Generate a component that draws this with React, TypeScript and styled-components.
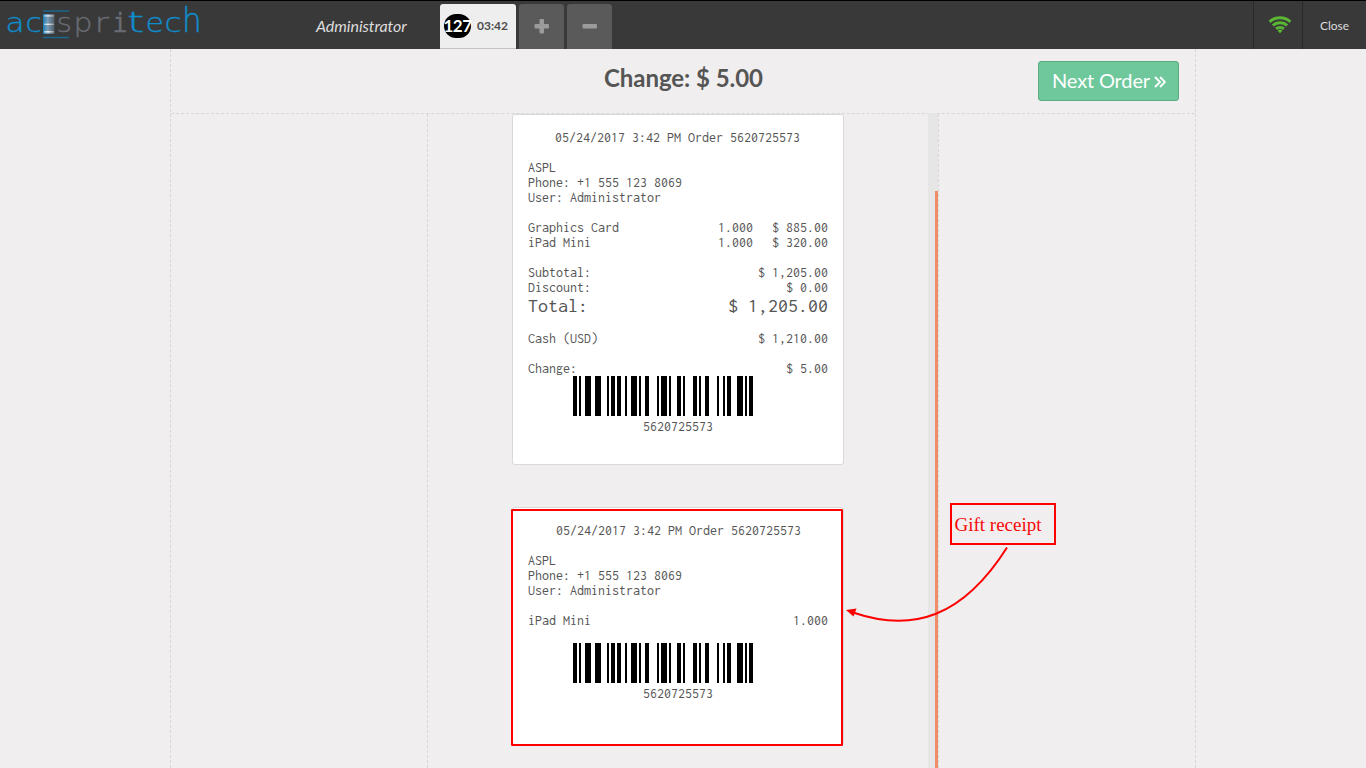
import React from "react";
import styled, { createGlobalStyle } from "styled-components";

const GlobalStyle = createGlobalStyle`
  * { box-sizing: border-box; }
  body { margin: 0; background: #f0eeee; overflow: hidden; }
`;

const Screen = styled.div`
  position: relative;
  display: flex;
  flex-direction: column;
  width: 1366px;
  height: 768px;
  background: #f0eeee;
  color: #555;
  font-family: Lato, sans-serif;
`;

const TopBar = styled.header`
  display: flex;
  flex: none;
  height: 49px;
  border-top: 1px solid #000;
  background: #393939;
`;

const Brand = styled.div`
  width: 220px;
  height: 48px;
`;

const UserName = styled.div`
  width: 220px;
  padding-left: 96px;
  line-height: 49px;
  font-size: 16px;
  font-style: italic;
  letter-spacing: -0.05px;
  color: #ddd;
`;

const Tabs = styled.nav`
  display: flex;
  flex: 1;
  gap: 3px;
  padding-top: 3px;
`;

const OrderTab = styled.div`
  display: flex;
  align-items: center;
  width: 76px;
  padding: 0 0 1px 4px;
  border-radius: 3px 3px 0 0;
  border-bottom: 1px solid #c4c4c4;
  background: #eee;
`;

const OrderNumber = styled.span`
  display: flex;
  justify-content: center;
  width: 27px;
  height: 24px;
  margin-top: 1px;
  border-radius: 12px;
  background: #000;
  color: #fff;
  font-size: 17px;
  font-weight: 700;
  line-height: 24px;
  letter-spacing: -0.5px;
`;

const OrderTime = styled.span`
  margin-left: 6px;
  font-size: 12px;
  font-weight: 700;
  color: #4c4c4c;
`;

const TabButton = styled.button`
  display: flex;
  justify-content: center;
  width: 45px;
  padding: 15px 0 0;
  border: 0;
  border-radius: 3px 3px 0 0;
  background: #5a5a5a;
`;

const BarCell = styled.div<{ $width: number }>`
  display: flex;
  justify-content: center;
  width: ${(p) => p.$width}px;
  border-left: 1px solid #292929;
  color: #ddd;
  font-size: 12px;
  line-height: 49px;
`;

const StatusIcon = styled.svg`
  margin: 15px 0 0 4px;
`;

const Content = styled.main`
  display: flex;
  flex: 1;
  flex-direction: column;
  width: 1026px;
  margin-left: 170px;
  border: dashed #d7d7d7;
  border-width: 0 1px;
`;

const ActionBar = styled.div`
  display: flex;
  justify-content: space-between;
  height: 65px;
  padding: 12px 16px 0 0;
  border-bottom: 1px dashed #d7d7d7;
`;

const ChangeTitle = styled.h1`
  margin: 1px 0 0 433px;
  font-size: 24px;
  font-weight: 700;
  letter-spacing: -0.05px;
  line-height: 31px;
  white-space: nowrap;
`;

const NextButton = styled.button`
  display: flex;
  align-items: center;
  justify-content: center;
  gap: 4px;
  width: 141px;
  height: 40px;
  padding: 0 0 2px 1px;
  border: 1px solid #5cab83;
  border-radius: 3px;
  background: #6ec89b;
  color: #fff;
  font-family: inherit;
  font-size: 20px;
  letter-spacing: -0.15px;
  white-space: nowrap;
`;

const NextIcon = styled.svg`
  margin-top: 3px;
`;

const Columns = styled.div`
  display: flex;
  flex: 1;
  min-height: 0;
`;

const SideColumn = styled.div`
  width: 257px;
  border-right: 1px dashed #d7d7d7;
`;

const ReceiptColumn = styled.div`
  display: flex;
  width: 511px;
  border-right: 1px dashed #d7d7d7;
`;

const ReceiptList = styled.div`
  display: flex;
  flex: 1;
  flex-direction: column;
  align-items: flex-start;
  gap: 42px;
  padding-left: 84px;
`;

const ScrollTrack = styled.div`
  display: flex;
  justify-content: flex-end;
  width: 10px;
  margin-top: -1px;
  padding-top: 78px;
  background: #e6e6e6;
`;

const ScrollThumb = styled.div`
  width: 3px;
  background: #ef8d6a;
`;

const Card = styled.section<{ $height: number }>`
  flex: none;
  width: 332px;
  height: ${(p) => p.$height}px;
  padding: 15px;
  border: 1px solid #d9d9d9;
  border-radius: 3px;
  background: #fff;
  font-family: Inconsolata, "DejaVu Sans Mono", monospace;
  font-size: 14px;
  line-height: 15px;
  white-space: pre;
`;

const Heading = styled.div<{ $indent: number }>`
  padding-left: ${(p) => p.$indent}px;
`;

const Block = styled.div`
  margin-top: 15px;
`;

const Row = styled.div<{ $large?: boolean }>`
  display: flex;
  justify-content: space-between;
  font-size: ${(p) => (p.$large ? "20px" : "inherit")};
  line-height: ${(p) => (p.$large ? "21px" : "inherit")};
`;

const Price = styled.span`
  display: inline-block;
  width: 75px;
  text-align: right;
`;

const Code = styled.div<{ $gap: number }>`
  display: flex;
  flex-direction: column;
  align-items: center;
  gap: 3px;
  margin-top: ${(p) => p.$gap}px;
`;

const Bars = styled.svg`
  display: block;
  margin-right: 30px;
`;

const GiftFrame = styled.div`
  position: absolute;
  left: 511px;
  top: 509px;
  width: 332px;
  height: 237px;
  border: 2px solid #f00;
  border-radius: 1px;
`;

const GiftLabel = styled.div`
  position: absolute;
  left: 950px;
  top: 503px;
  width: 106px;
  height: 42px;
  padding-left: 2.500px;
  border: 2px solid #f00;
  color: #f80808;
  font-family: "Liberation Serif", serif;
  font-size: 19px;
  line-height: 39px;
  white-space: nowrap;
`;

const Arrow = styled.svg`
  position: absolute;
  left: 840px;
  top: 540px;
`;

const barcode = [
  [0, 2], [3, 1], [6, 3], [11, 3], [17, 1], [19, 2], [22, 2], [26, 1], [29, 3],
  [33, 1], [36, 2], [42, 1], [44, 3], [48, 1], [52, 2], [55, 1], [60, 2], [63, 1],
  [66, 2], [72, 1], [75, 1], [77, 2], [82, 3], [86, 1], [88, 2],
];

function Barcode({ gap }: { gap: number }) {
  return (
    <Code $gap={gap}>
      <Bars width="180" height="40" viewBox="0 0 90 40" preserveAspectRatio="none" shapeRendering="crispEdges">
        {barcode.map(([x, w]) => (
          <rect key={x} x={x} width={w} height="40" />
        ))}
      </Bars>
      <span>5620725573</span>
    </Code>
  );
}

function ReceiptHead({ indent }: { indent: number }) {
  return (
    <>
      <Heading $indent={indent}>05/24/2017 3:42 PM Order 5620725573</Heading>
      <Block>
        <div>ASPL</div>
        <div>Phone: +1 555 123 8069</div>
        <div>User: Administrator</div>
      </Block>
    </>
  );
}

type Letter = { char: string; x: number; color: string; sx?: number; sy?: number; mono?: boolean };

const BLUE = "#0f8ccb";
const GREY = "#686b73";

const letters: Letter[] = [
  { char: "a", x: 5.5, color: BLUE, sx: 1.2 },
  { char: "c", x: 25.5, color: BLUE },
  { char: "s", x: 56.5, color: GREY },
  { char: "p", x: 73.5, color: GREY },
  { char: "r", x: 94.5, color: GREY, sx: 1.35 },
  { char: "i", x: 112.5, color: GREY, sx: 0.95, mono: true },
  { char: "t", x: 127, color: BLUE, sx: 1.7, sy: 1.12 },
  { char: "e", x: 145.5, color: BLUE },
  { char: "c", x: 164.5, color: BLUE, sx: 1.2 },
  { char: "h", x: 182, color: BLUE, sx: 1.2, sy: 1.3 },
];

function Logo() {
  return (
    <svg width="220" height="48" viewBox="0 1 220 48">
      <defs>
        <linearGradient id="stack">
          <stop offset="0" stopColor="#1680b8" />
          <stop offset="0.400" stopColor="#7d9cb5" />
          <stop offset="1" stopColor="#4f5a66" />
        </linearGradient>
        <linearGradient id="plate">
          <stop offset="0" stopColor="#8fc0dc" />
          <stop offset="0.400" stopColor="#f0f0f0" />
          <stop offset="1" stopColor="#8d949b" />
        </linearGradient>
      </defs>
      <rect x="43" y="14" width="11.500" height="20" fill="url(#stack)" />
      <g fill="url(#plate)">
        <rect x="44" y="15.200" width="10" height="1.400" />
        <rect x="44" y="23.600" width="10" height="1.400" />
        <rect x="44" y="31" width="10" height="1.600" />
      </g>
      <path d="M43 11h26M43 37.500h26" stroke="#1b678b" strokeWidth="1.300" />
      {letters.map(({ char, x, color, sx = 1.15, sy = 1, mono }) => (
        <text
          key={x}
          transform={`translate(${x} 32) scale(${sx} ${sy})`}
          fill={color}
          stroke={color}
          strokeWidth="0.350"
          fontFamily={mono ? "DejaVu Sans Mono, monospace" : "DejaVu Sans, sans-serif"}
          fontWeight="200"
          fontSize="26"
        >
          {char}
        </text>
      ))}
    </svg>
  );
}

export default function App() {
  return (
    <Screen>
      <GlobalStyle />
      <TopBar>
        <Brand><Logo /></Brand>
        <UserName>Administrator</UserName>
        <Tabs>
          <OrderTab>
            <OrderNumber>127</OrderNumber>
            <OrderTime>03:42</OrderTime>
          </OrderTab>
          <TabButton aria-label="Add order">
            <svg width="15" height="15" viewBox="0 0 15 15" fill="#9b9b9b">
              <rect x="0.500" y="5" width="14.500" height="4.500" rx="1" />
              <rect x="5.500" y="0" width="4.500" height="14.500" rx="1" />
            </svg>
          </TabButton>
          <TabButton aria-label="Remove order">
            <svg width="15" height="15" viewBox="0 0 15 15" fill="#9b9b9b">
              <rect x="0.500" y="5" width="14.500" height="4.500" rx="1" />
            </svg>
          </TabButton>
        </Tabs>
        <BarCell $width={49}>
          <StatusIcon width="24" height="18" viewBox="0 0 24 18" fill="none" stroke="#5ab634" strokeWidth="2.900">
            <path d="M1.600 5.800a15.500 15.500 0 0 1 20.800 0" />
            <path d="M4.900 9.500a10.400 10.400 0 0 1 14.200 0" />
            <path d="M8.100 12.900a5.800 5.800 0 0 1 7.800 0" />
            <path d="M12 17.200l-2.400-2.400a3.400 3.400 0 0 1 4.800 0z" fill="#5ab634" stroke="none" />
          </StatusIcon>
        </BarCell>
        <BarCell $width={64}>Close</BarCell>
      </TopBar>
      <Content>
        <ActionBar>
          <ChangeTitle>Change: $ 5.00</ChangeTitle>
          <NextButton>
            Next Order
            <NextIcon width="12" height="12" viewBox="0 0 12 12" fill="none" stroke="#fff" strokeWidth="1.900">
              <path d="M1 1l5 5-5 5M6 1l5 5-5 5" />
            </NextIcon>
          </NextButton>
        </ActionBar>
        <Columns>
          <SideColumn />
          <ReceiptColumn>
            <ReceiptList>
              <Card $height={351}>
                <ReceiptHead indent={27} />
                <Block>
                  <Row><span>Graphics Card</span><span>1.000<Price>$ 885.00</Price></span></Row>
                  <Row><span>iPad Mini</span><span>1.000<Price>$ 320.00</Price></span></Row>
                </Block>
                <Block>
                  <Row><span>Subtotal:</span><span>$ 1,205.00</span></Row>
                  <Row><span>Discount:</span><span>$ 0.00</span></Row>
                  <Row $large><span>Total:</span><span>$ 1,205.00</span></Row>
                </Block>
                <Block>
                  <Row><span>Cash (USD)</span><span>$ 1,210.00</span></Row>
                </Block>
                <Block>
                  <Row><span>Change:</span><span>$ 5.00</span></Row>
                </Block>
                <Barcode gap={0} />
              </Card>
              <Card $height={238}>
                <ReceiptHead indent={28} />
                <Block>
                  <Row><span>iPad Mini</span><span>1.000</span></Row>
                </Block>
                <Barcode gap={15} />
              </Card>
            </ReceiptList>
            <ScrollTrack><ScrollThumb /></ScrollTrack>
          </ReceiptColumn>
        </Columns>
      </Content>
      <GiftFrame />
      <GiftLabel>Gift receipt</GiftLabel>
      <Arrow width="180" height="90" viewBox="840 540 180 90">
        <path d="M1007 547.500C963 617 913 633 853 612.500" fill="none" stroke="#f00" strokeWidth="2" />
        <path d="M846 610l10.500-1.500-3 8z" fill="#f00" />
      </Arrow>
    </Screen>
  );
}
